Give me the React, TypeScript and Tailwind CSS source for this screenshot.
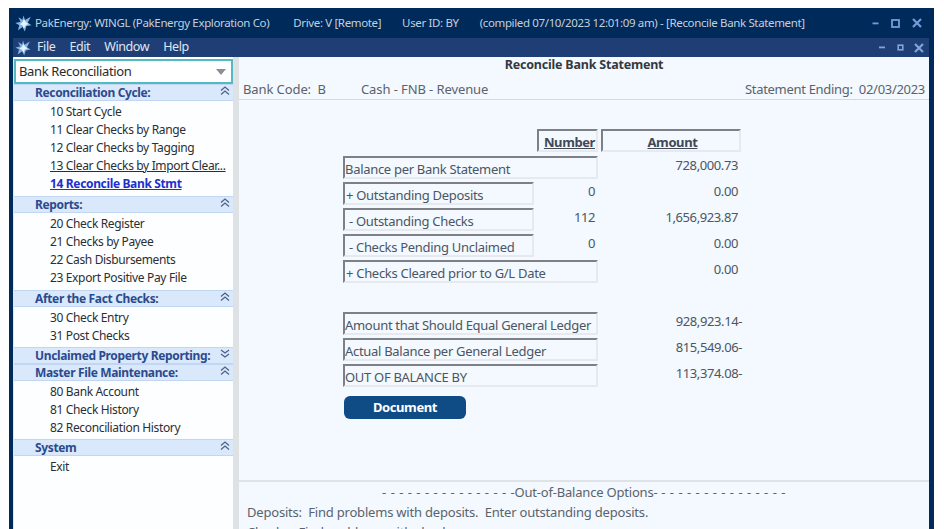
const font = { fontFamily: '"Noto Sans", "Open Sans", sans-serif' };

function Logo({ size }: { size: number }) {
  return (
    <svg width={size} height={size} viewBox="0 0 20 20" className="shrink-0">
      <path d="M10 0.5 L11.8 6 L18.5 2 L15 9 L19.5 12 L13.5 13 L11.5 19.5 L9 14 L3.5 18 L5 12 L0.5 9.5 L6.5 8 L4 2.5 L8.8 5.5 Z" fill="#7fb4e6" />
      <path d="M10.5 5 L13 8.5 L16 10.5 L12.5 12 L10.5 16 L8.8 12.2 L5.5 11 L8.5 8.8 Z" fill="#e8f3fc" />
    </svg>
  );
}

function WinButtons({ small }: { small?: boolean }) {
  if (small) {
    return (
      <div className="flex items-center gap-[9px] pr-[5px]">
        <svg width="9" height="9" viewBox="0 0 9 9"><rect x="1" y="3.5" width="6" height="1.8" fill="#7ea6da" /></svg>
        <svg width="9" height="9" viewBox="0 0 9 9"><rect x="2.2" y="2.2" width="4.6" height="4.6" fill="none" stroke="#7ea6da" strokeWidth="1.6" /></svg>
        <svg width="10" height="10" viewBox="0 0 10 10"><path d="M1 1 L9 9 M9 1 L1 9" stroke="#7ea6da" strokeWidth="2.2" /></svg>
      </div>
    );
  }
  return (
    <div className="flex items-center gap-[12px] pr-[12px]">
      <svg width="7" height="9" viewBox="0 0 7 9"><rect x="0.5" y="3.5" width="6" height="1.8" fill="#6f9ed8" /></svg>
      <svg width="9" height="9" viewBox="0 0 9 9"><rect x="1" y="1" width="7" height="7" fill="none" stroke="#6f9ed8" strokeWidth="1.8" /></svg>
      <svg width="10" height="10" viewBox="0 0 10 10"><path d="M1 1 L9 9 M9 1 L1 9" stroke="#6f9ed8" strokeWidth="2.2" /></svg>
    </div>
  );
}

function Chevrons({ down }: { down?: boolean }) {
  return (
    <svg width="10" height="10" viewBox="0 0 10 10" className="mr-[3px] mt-[-3px]">
      <path d={down ? "M1 1 L5 4 L9 1 M1 5 L5 8 L9 5" : "M1 4.5 L5 1 L9 4.5 M1 8.5 L5 5 L9 8.5"} fill="none" stroke="#4a6288" strokeWidth="1.2" />
    </svg>
  );
}

type Group = { title: string; items: string[]; down?: boolean; mb: string };
const groups: Group[] = [
  { title: "Reconciliation Cycle:", items: ["10 Start Cycle", "11 Clear Checks by Range", "12 Clear Checks by Tagging", "13 Clear Checks by Import Clear...", "14 Reconcile Bank Stmt"], mb: "mb-[3px]" },
  { title: "Reports:", items: ["20 Check Register", "21 Checks by Payee", "22 Cash Disbursements", "23 Export Positive Pay File"], mb: "mb-[3px]" },
  { title: "After the Fact Checks:", items: ["30 Check Entry", "31 Post Checks"], mb: "mb-[2px]" },
  { title: "Unclaimed Property Reporting:", items: [], down: true, mb: "" },
  { title: "Master File Maintenance:", items: ["80 Bank Account", "81 Check History", "82 Reconciliation History"], mb: "mb-[2px]" },
  { title: "System", items: ["Exit"], mb: "" },
];

function Sidebar() {
  return (
    <div className="w-[219px] ml-[1px] shrink-0 bg-[#fdfeff] flex flex-col tracking-[-0.35px]">
      <div className="h-[25px] mt-[2px] border-2 border-[#55b9c2] bg-white flex items-center justify-between pl-[3px] pr-[3px] text-[13px] tracking-[-0.35px] text-[#2a2a2a]">
        <span>Bank Reconciliation</span>
        <span className="w-0 h-0 border-l-[5px] border-r-[5px] border-t-[6px] border-l-transparent border-r-transparent border-t-[#8a8f96] mr-[2px]" />
      </div>
      {groups.map((g) => (
        <div key={g.title} className={g.mb}>
          <div className="h-[17px] bg-[#d9e8fb] border-t border-b border-[#c0d6f2] flex items-center justify-between pl-[21px]">
            <span className="text-[12px] font-bold text-[#2c4a8c] leading-none whitespace-nowrap">{g.title}</span>
            <Chevrons down={g.down} />
          </div>
          {g.items.length > 0 && (
            <div className="pt-[2px] pl-[36px] flex flex-col">
              {g.items.map((it) =>
                it.startsWith("14") ? (
                  <span key={it} className="h-[18px] leading-[18px] text-[12px] font-bold underline text-[#1f2fd0] whitespace-nowrap">{it}</span>
                ) : (
                  <span key={it} className={`h-[18px] leading-[18px] text-[12px] text-[#2b2f33] whitespace-nowrap ${it.startsWith("13") ? "underline" : ""}`}>{it}</span>
                )
              )}
            </div>
          )}
        </div>
      ))}
    </div>
  );
}

function Box({ w, children, pad }: { w: string; children: React.ReactNode; pad?: string }) {
  return (
    <div className={`${w} h-[23px] shrink-0 border-t-2 border-l-2 border-[#7d8187] border-r-2 border-b-2 [border-right-color:#e6eaee] [border-bottom-color:#e6eaee] flex items-center whitespace-nowrap text-[13px] tracking-[-0.3px] text-[#4b5563] leading-none pt-[3px] ${pad ?? "pl-0"}`}>
      {children}
    </div>
  );
}

const valueCls = "shrink-0 text-right text-[13px] text-[#4b5563] leading-[18px]";

function Row({ label, wide, num, amt, pad }: { label: string; wide?: boolean; num?: string; amt: string; pad?: string }) {
  return (
    <div className="flex h-[23px] mb-[3px]">
      <Box w={wide ? "w-[255px]" : "w-[191px]"} pad={pad}>{label}</Box>
      {!wide && <div className={`w-[61px] ${valueCls}`}>{num}</div>}
      {!wide && <div className="w-[3px] shrink-0" />}
      <div className={`w-[140px] ${valueCls}`}>{amt}</div>
    </div>
  );
}

function RowM({ label, amt }: { label: string; amt: string }) {
  return (
    <div className="flex h-[23px] mb-[3px]">
      <Box w="w-[255px]">{label}</Box>
      <div className={`w-[144px] ${valueCls}`}>{amt}</div>
    </div>
  );
}

function Main() {
  return (
    <div className="flex-1 min-w-0 bg-[#f3f9fe] flex flex-col text-[#4b5563] tracking-[-0.4px]">
      <div className="h-[43px] border-b border-[#d5d9dd] shrink-0 flex flex-col pl-[4px] pr-[4px]">
        <div className="h-[16px] mt-[1px] text-center text-[12.5px] font-bold text-[#33393f] leading-[14px] tracking-[-0.2px]">Reconcile Bank Statement</div>
        <div className="flex items-center text-[13px] mt-[6px] leading-[18px] text-[#5a636d] tracking-[-0.1px]">
          <span className="w-[118px]">Bank Code:&nbsp;&nbsp;B</span>
          <span>Cash - FNB - Revenue</span>
          <span className="ml-auto tracking-[-0.3px]">Statement Ending:&nbsp;&nbsp;02/03/2023</span>
        </div>
      </div>
      <div className="flex-1 pl-[104px] pt-[29px]">
        <div className="flex h-[23px] mb-[4px] pl-[194px]">
          <Box w="w-[61px]"><span className="w-full text-right font-bold underline text-[#3f4a56] text-[13px] tracking-[-0.4px] pr-[1px]">Number</span></Box>
          <div className="w-[3px]" />
          <Box w="w-[140px]"><span className="w-full text-center font-bold underline text-[#3f4a56] text-[13px] tracking-[-0.4px] pl-[3px]">Amount</span></Box>
        </div>
        <Row label="Balance per Bank Statement" wide amt="728,000.73" />
        <Row label="+ Outstanding Deposits" num="0" amt="0.00" pad="pl-[1px]" />
        <Row label="- Outstanding Checks" num="112" amt="1,656,923.87" pad="pl-[4px]" />
        <Row label="- Checks Pending Unclaimed" num="0" amt="0.00" pad="pl-[4px]" />
        <Row label="+ Checks Cleared prior to G/L Date" wide amt="0.00" pad="pl-[1px]" />
        <div className="h-[26px]" />
        <RowM label="Amount that Should Equal General Ledger" amt="928,923.14-" />
        <RowM label="Actual Balance per General Ledger" amt="815,549.06-" />
        <RowM label="OUT OF BALANCE BY" amt="113,374.08-" />
        <button className="mt-[9px] ml-[1px] w-[122px] h-[23px] rounded-[6px] bg-[#0f4c85] text-white font-bold text-[13px] flex items-center justify-center leading-none">Document</button>
      </div>
      <div className="h-[49px] shrink-0 border-t-2 border-[#dfe3e7] pl-[8px] text-[13px] text-[#5a636d] overflow-hidden leading-[20px] tracking-[-0.2px]">
        <div className="flex justify-center whitespace-pre pr-[8px]">
          <span className="tracking-[0.5px]">- - - - - - - - - - - - - - - </span>
          <span>-Out-of-Balance Options-</span>
          <span className="tracking-[0.5px]"> - - - - - - - - - - - - - - -</span>
        </div>
        <div className="whitespace-pre">Deposits:  Find problems with deposits.  Enter outstanding deposits.</div>
        <div className="whitespace-pre">Checks:  Find problems with checks.</div>
      </div>
    </div>
  );
}

export default function App() {
  return (
    <div className="w-[944px] h-[529px] bg-white pt-[8px] pl-[9px] pr-[10px] overflow-hidden" style={font}>
      <div className="h-[521px] bg-[#002a5a] flex flex-col">
        <div className="h-[30px] shrink-0 flex items-center pl-[6px] text-[#c3cfde] text-[11.5px] tracking-[-0.36px]">
          <Logo size={17} />
          <span className="ml-[3px] whitespace-pre">PakEnergy: WINGL (PakEnergy Exploration Co)</span>
          <span className="ml-[24px] whitespace-pre">Drive: V [Remote]</span>
          <span className="ml-[21px] whitespace-pre">User ID: BY</span>
          <span className="ml-[21px] whitespace-pre">(compiled 07/10/2023 12:01:09 am) - [Reconcile Bank Statement]</span>
          <div className="ml-auto"><WinButtons /></div>
        </div>
        <div className="flex-1 min-h-0 flex flex-col ml-[4px] mr-[5px]">
          <div className="h-[19px] shrink-0 bg-[#1f3e76] flex items-center pl-[2px] text-[#dfe7f2] text-[12.5px] tracking-[-0.4px]">
            <Logo size={16} />
            <span className="ml-[6px]">File</span>
            <span className="ml-[14px]">Edit</span>
            <span className="ml-[14px]">Window</span>
            <span className="ml-[14px]">Help</span>
            <div className="ml-auto"><WinButtons small /></div>
          </div>
          <div className="flex-1 min-h-0 flex bg-[#e3e5e8]">
            <Sidebar />
            <div className="w-[6px] shrink-0 bg-[#dfe2e5]" />
            <Main />
          </div>
        </div>
      </div>
    </div>
  );
}
